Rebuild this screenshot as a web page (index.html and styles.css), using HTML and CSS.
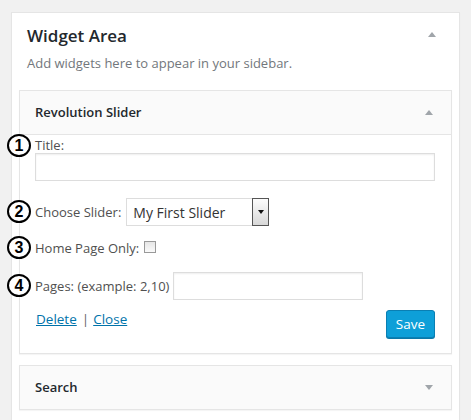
FILE: index.html
```html
<!DOCTYPE html>
<html lang="en">
<head>
<meta charset="utf-8">
<title>Widget Area</title>
<link rel="stylesheet" href="styles.css">
</head>
<body>
<div class="sidebar">
  <div class="sidebar-head">
    <h2>Widget Area</h2>
    <span class="tri tri-up tri-head"></span>
  </div>
  <p class="desc">Add widgets here to appear in your sidebar.</p>

  <div class="widget">
    <div class="widget-top">
      <h3>Revolution Slider</h3>
      <span class="tri tri-up"></span>
    </div>
    <div class="widget-inside">
      <div class="line first">
        <span class="num">1</span>
        <label for="title">Title:</label>
      </div>
      <input id="title" class="text-wide" type="text">

      <div class="row row-select">
        <span class="num">2</span>
        <label for="slider">Choose Slider:</label>
        <div class="select-wrap">
          <select id="slider" class="select"><option>My First Slider</option></select>
          <span class="select-btn"><span class="tri tri-down tri-black"></span></span>
        </div>
      </div>

      <div class="row row-check">
        <span class="num">3</span>
        <label for="home">Home Page Only:</label>
        <span class="checkbox" id="home"></span>
      </div>

      <div class="row row-pages">
        <span class="num">4</span>
        <label for="pages">Pages: (example: 2,10)</label>
        <input id="pages" class="text-pages" type="text">
      </div>

      <div class="actions">
        <div class="links"><a href="#">Delete</a><span class="sep">|</span><a href="#">Close</a></div>
        <button class="save" type="button">Save</button>
      </div>
    </div>
  </div>

  <div class="widget closed">
    <div class="widget-top">
      <h3>Search</h3>
      <span class="tri tri-down"></span>
    </div>
  </div>
</div>
</body>
</html>
```

FILE: styles.css
```css
* { box-sizing: border-box; }

html, body {
  margin: 0;
  padding: 0;
  background: #f1f1f1;
  font-family: "Open Sans", "Liberation Sans", sans-serif;
  font-size: 13px;
  color: #555;
}

.sidebar {
  margin: 12px 0 0 11px;
  width: 449px;
  background: #fff;
  border: 1px solid #e5e5e5;
  box-shadow: 0 1px 1px rgba(0,0,0,0.04);
  padding: 11px 7px 30px;
}

.sidebar-head {
  display: flex;
  align-items: center;
  justify-content: space-between;
  padding: 0 16px 0 8px;
}

.sidebar-head h2 {
  margin: 0;
  font-size: 17px;
  line-height: 24px;
  font-weight: 600;
  color: #23282d;
}

.tri {
  display: block;
  width: 0;
  height: 0;
  border-left: 4px solid transparent;
  border-right: 4px solid transparent;
}
.tri-up { border-bottom: 5px solid #a0a5aa; }
.tri-down { border-top: 5px solid #a0a5aa; }
.tri-head { margin-top: -4px; }
.tri-black { border-top-color: #111; border-left-width: 3px; border-right-width: 3px; border-top-width: 4px; }

.desc {
  margin: 6px 8px 18px;
  line-height: 18px;
  color: #72777c;
}

.widget {
  border: 1px solid #e5e5e5;
  background: #fff;
  box-shadow: 0 1px 1px rgba(0,0,0,0.04);
}
.widget.closed { margin-top: 11px; }

.widget-top {
  display: flex;
  align-items: center;
  justify-content: space-between;
  background: #fafafa;
  padding-right: 18px;
}
.widget .widget-top { border-bottom: 1px solid #e5e5e5; }
.widget.closed .widget-top { border-bottom: 0; }

.widget-top h3 {
  margin: 0;
  padding: 15px;
  font-size: 13px;
  line-height: 13px;
  font-weight: 600;
  color: #23282d;
}

.widget-inside {
  padding: 3px 16px 15px 15px;
}

.num {
  position: absolute;
  left: -28px;
  top: 50%;
  margin-top: -12px;
  width: 24px;
  height: 23px;
  border: 2px solid #000;
  border-radius: 50%;
  background: #fff;
  color: #000;
  font-family: "Liberation Sans", Arial, sans-serif;
  font-weight: 700;
  font-size: 16px;
  line-height: 19px;
  text-align: center;
}

.line {
  position: relative;
  line-height: 15px;
}

label { color: #505050; }

input[type="text"] {
  display: block;
  height: 28px;
  border: 1px solid #ddd;
  box-shadow: inset 0 1px 2px rgba(0,0,0,0.07);
  background: #fff;
  font: inherit;
  margin: 0;
}

.text-wide { width: 100%; }

.row {
  position: relative;
  display: flex;
  align-items: center;
}

.row-select { margin-top: 17px; height: 28px; }

.select-wrap {
  display: flex;
  margin-left: 5px;
  width: 143px;
  height: 28px;
  border: 1px solid #ddd;
  background: #fff;
}
.select {
  appearance: none;
  -webkit-appearance: none;
  flex: 1;
  min-width: 0;
  border: 0;
  background: transparent;
  font-family: "Open Sans", "Liberation Sans", sans-serif;
  font-size: 14px;
  color: #333;
  padding: 0 0 0 6px;
  margin: 0;
  outline: none;
}
.select-btn {
  display: flex;
  align-items: center;
  justify-content: center;
  width: 17px;
  margin: -1px -1px -1px 0;
  border: 1px solid #555;
  background: linear-gradient(#fcfcfc, #d8d8d8);
}

.row-check { margin-top: 14px; height: 16px; line-height: 16px; }
.checkbox {
  display: block;
  width: 12px;
  height: 12px;
  margin: -2px 0 0 5px;
  border: 1px solid #999;
  background: linear-gradient(#e6e6e6, #fafafa);
}

.row-pages { margin-top: 16px; height: 28px; }
.text-pages { width: 190px; margin-left: 4px !important; }

.actions {
  margin-top: 10px;
  display: flex;
  justify-content: space-between;
  align-items: flex-start;
}
.links { line-height: 16px; padding-left: 1px; padding-top: 1px; font-size: 13.5px; }
.links a { color: #0073aa; text-decoration: underline; }
.sep { color: #666; margin: 0 4px 0 5px; }

.save {
  height: 28px;
  padding: 0 9px 1px;
  border: 1px solid #0a7fb3;
  border-radius: 3px;
  background: #0e9fd8;
  box-shadow: 0 1px 0 #0a78a8;
  color: #fff;
  font-family: "Open Sans", "Liberation Sans", sans-serif;
  font-size: 13.5px;
  line-height: 24px;
}
```
